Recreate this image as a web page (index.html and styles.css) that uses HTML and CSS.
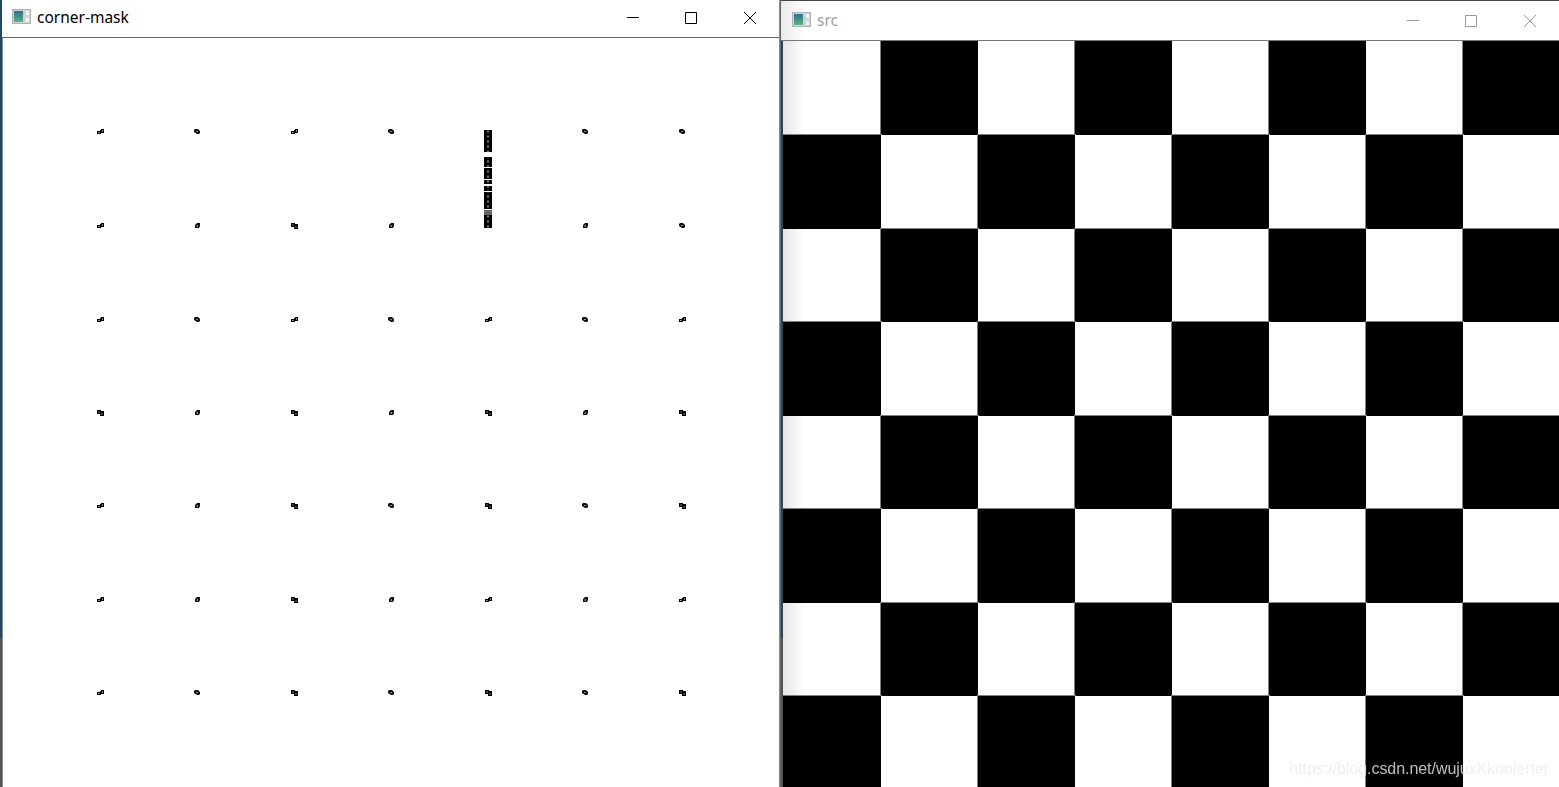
FILE: index.html
```html
<!DOCTYPE html>
<html lang="en">
<head>
<meta charset="utf-8">
<title>corner-mask and src</title>
<link rel="stylesheet" href="styles.css">
</head>
<body>
<svg class="defs" width="0" height="0" aria-hidden="true">
  <defs>
    <linearGradient id="appfill" x1="0" y1="0" x2="0" y2="1"><stop offset="0" stop-color="#2f6f92"/><stop offset="1" stop-color="#5fb083"/></linearGradient>
    <symbol id="app" viewBox="0 0 19 15">
      <rect x=".75" y=".75" width="17.5" height="13.5" fill="#f1f3f3" stroke="#b0b4b6" stroke-width="1.5"/>
      <rect x="2" y="2" width="9" height="11" fill="url(#appfill)"/>
      <rect x="11" y="2" width="3" height="11" fill="#c9d8d2"/>
      <rect x="14" y="6" width="3" height="3" fill="#cfd6d6"/>
    </symbol>
    <symbol id="wide" viewBox="0 0 7 6"><path fill="#000" fill-rule="evenodd" d="M0 2h3V1h1V0h3v4H4v1H0zM1.4 3h1v1h-1zM5 1.5h1v1H5z"/></symbol>
    <symbol id="round" viewBox="0 0 7 6"><path fill="#111" fill-rule="evenodd" d="M1 0h3l2 2v2l-1 1H3L0 3V1zM2.5 2h1v1h-1z"/></symbol>
    <symbol id="slim" viewBox="0 0 7 6"><path fill="#111" fill-rule="evenodd" d="M3 0h3v3L5 5H1V2zM2.6 2.5h1.4v1H2.6z"/></symbol>
    <symbol id="block" viewBox="0 0 7 6"><path fill="#000" fill-rule="evenodd" d="M0 0h4v1h3v5H3V4H0zM1.5 1.5h1v1h-1zM4.5 3.5h1v1h-1z"/></symbol>
    <pattern id="holes" width="8" height="5" patternUnits="userSpaceOnUse"><rect width="8" height="5" fill="#000"/><rect x="3" y="1.5" width="2" height="2" fill="#777"/></pattern>
  </defs>
</svg>

<main class="desktop">
  <section class="window mask-window">
    <header class="titlebar">
      <svg class="app-icon"><use href="#app"/></svg>
      <span class="title">corner-mask</span>
      <div class="controls">
        <span class="control"><svg viewBox="0 0 12 12"><path d="M0 5.5h12"/></svg></span>
        <span class="control"><svg viewBox="0 0 12 12"><path d="M.5.5h11v11H.5z"/></svg></span>
        <span class="control"><svg viewBox="0 0 12 12"><path d="M0 0l12 12M12 0L0 12"/></svg></span>
      </div>
    </header>
    <div class="mask">
      <svg class="dot"><use href="#wide"/></svg><svg class="dot"><use href="#round"/></svg><svg class="dot"><use href="#wide"/></svg><svg class="dot"><use href="#round"/></svg>
      <svg class="bar" viewBox="0 0 8 100">
        <rect x="0" y="1" width="8" height="22" fill="url(#holes)"/>
        <rect x="0" y="28" width="8" height="10" fill="url(#holes)"/>
        <rect x="0" y="39" width="8" height="11" fill="url(#holes)"/>
        <rect x="0" y="51" width="8" height="4" fill="url(#holes)"/>
        <rect x="0" y="57" width="8" height="5" fill="url(#holes)"/>
        <rect x="0" y="63" width="8" height="17" fill="url(#holes)"/>
        <rect x="0" y="81" width="8" height="5" fill="#666"/>
        <rect x="0" y="86" width="8" height="13" fill="url(#holes)"/>
      </svg>
      <svg class="dot"><use href="#round"/></svg><svg class="dot"><use href="#round"/></svg>

      <svg class="dot"><use href="#wide"/></svg><svg class="dot"><use href="#slim"/></svg><svg class="dot"><use href="#block"/></svg><svg class="dot"><use href="#slim"/></svg>
      <svg class="dot"><use href="#slim"/></svg><svg class="dot"><use href="#round"/></svg>

      <svg class="dot"><use href="#wide"/></svg><svg class="dot"><use href="#round"/></svg><svg class="dot"><use href="#wide"/></svg><svg class="dot"><use href="#round"/></svg><svg class="dot"><use href="#wide"/></svg><svg class="dot"><use href="#round"/></svg><svg class="dot"><use href="#wide"/></svg>

      <svg class="dot"><use href="#block"/></svg><svg class="dot"><use href="#slim"/></svg><svg class="dot"><use href="#block"/></svg><svg class="dot"><use href="#slim"/></svg><svg class="dot"><use href="#block"/></svg><svg class="dot"><use href="#slim"/></svg><svg class="dot"><use href="#block"/></svg>

      <svg class="dot"><use href="#wide"/></svg><svg class="dot"><use href="#slim"/></svg><svg class="dot"><use href="#block"/></svg><svg class="dot"><use href="#round"/></svg><svg class="dot"><use href="#block"/></svg><svg class="dot"><use href="#round"/></svg><svg class="dot"><use href="#block"/></svg>

      <svg class="dot"><use href="#wide"/></svg><svg class="dot"><use href="#slim"/></svg><svg class="dot"><use href="#block"/></svg><svg class="dot"><use href="#slim"/></svg><svg class="dot"><use href="#wide"/></svg><svg class="dot"><use href="#slim"/></svg><svg class="dot"><use href="#wide"/></svg>

      <svg class="dot"><use href="#wide"/></svg><svg class="dot"><use href="#round"/></svg><svg class="dot"><use href="#block"/></svg><svg class="dot"><use href="#round"/></svg><svg class="dot"><use href="#block"/></svg><svg class="dot"><use href="#round"/></svg><svg class="dot"><use href="#block"/></svg>
    </div>
  </section>

  <section class="window src-window">
    <header class="titlebar">
      <svg class="app-icon"><use href="#app"/></svg>
      <span class="title">src</span>
      <div class="controls">
        <span class="control"><svg viewBox="0 0 12 12"><path d="M0 5.5h12"/></svg></span>
        <span class="control"><svg viewBox="0 0 12 12"><path d="M.5.5h11v11H.5z"/></svg></span>
        <span class="control"><svg viewBox="0 0 12 12"><path d="M0 0l12 12M12 0L0 12"/></svg></span>
      </div>
    </header>
    <div class="board">
      <i class="w edge"></i><i class="k"></i><i class="w"></i><i class="k"></i><i class="w"></i><i class="k"></i><i class="w"></i><i class="k"></i>
      <i class="k"></i><i class="w"></i><i class="k"></i><i class="w"></i><i class="k"></i><i class="w"></i><i class="k"></i><i class="w"></i>
      <i class="w edge"></i><i class="k"></i><i class="w"></i><i class="k"></i><i class="w"></i><i class="k"></i><i class="w"></i><i class="k"></i>
      <i class="k"></i><i class="w"></i><i class="k"></i><i class="w"></i><i class="k"></i><i class="w"></i><i class="k"></i><i class="w"></i>
      <i class="w edge"></i><i class="k"></i><i class="w"></i><i class="k"></i><i class="w"></i><i class="k"></i><i class="w"></i><i class="k"></i>
      <i class="k"></i><i class="w"></i><i class="k"></i><i class="w"></i><i class="k"></i><i class="w"></i><i class="k"></i><i class="w"></i>
      <i class="w edge"></i><i class="k"></i><i class="w"></i><i class="k"></i><i class="w"></i><i class="k"></i><i class="w"></i><i class="k"></i>
      <i class="k"></i><i class="w"></i><i class="k"></i><i class="w"></i><i class="k"></i><i class="w"></i><i class="k"></i><i class="w"></i>
    </div>
  </section>

  <div class="watermark">https://blog.csdn.net/wujuxKkoolerter</div>
</main>
</body>
</html>
```

FILE: styles.css
```css
* { box-sizing: border-box; }

html, body {
  margin: 0;
  height: 100%;
  overflow: hidden;
}

.defs { position: absolute; }

.desktop {
  position: relative;
  width: 1559px;
  height: 787px;
  overflow: hidden;
  background: linear-gradient(#1c4a66 0, #1c4a66 638px, #555 638px, #555 100%);
}

.window {
  position: absolute;
  display: flex;
  flex-direction: column;
}

.mask-window {
  left: 2px;
  top: 0;
  width: 778px;
  height: 787px;
  background: #fff;
  border-right: 1px solid #8a8a8a;
  z-index: 2;
}

.src-window {
  left: 781px;
  top: 0;
  width: 778px;
  height: 787px;
  border-top: 1px solid #444;
  box-shadow: -1px 0 0 #666;
}

.titlebar {
  display: flex;
  align-items: center;
  flex: none;
  background: #fff;
}

.mask-window .titlebar {
  height: 38px;
  padding: 0 0 4px 10px;
  border-bottom: 1px solid #646464;
}

.src-window .titlebar {
  height: 40px;
  padding: 0 0 2px 11px;
  border-bottom: 1px solid #777;
  background: linear-gradient(90deg, #e9e9e9 0, #fff 24px);
}

.app-icon {
  width: 19px;
  height: 15px;
  flex: none;
}

.title {
  margin: 1px 0 0 6px;
  font: 15.5px/20px "Noto Sans", sans-serif;
  color: #000;
}

.src-window .title {
  color: #98a2a8;
}

.controls {
  display: flex;
  align-self: flex-start;
  margin: 6px 0 0 auto;
}

.src-window .controls {
  margin-top: 8px;
}

.control {
  display: flex;
  align-items: center;
  justify-content: center;
  width: 58.5px;
  height: 24px;
}

.control svg {
  width: 12px;
  height: 12px;
  fill: none;
  stroke: #000;
  stroke-width: 1;
}

.src-window .control svg {
  stroke: #999;
}

/* corner mask */
.mask {
  flex: 1;
  display: grid;
  grid-template-columns: repeat(7, 97px);
  grid-template-rows: 94px 94px 93px 93px 94px 93px 94px;
  align-items: start;
  justify-items: start;
  padding: 91px 0 0 94px;
  border-left: 1px solid #8a8a8a;
  background: #fff;
}

.dot {
  width: 7px;
  height: 6px;
  display: block;
}

.bar {
  grid-row: span 2;
  width: 8px;
  height: 100px;
  margin-left: -1px;
  display: block;
}

/* chessboard */
.board {
  flex: 1;
  display: grid;
  grid-template-columns: 98px repeat(7, 97px);
  grid-template-rows: 94px 94px 93px 94px 93px 94px 93px 94px;
  margin-left: 2px;
  overflow: hidden;
  min-height: 0;
}

.board i { display: block; }

.w { background: #fff; }

.edge { background: linear-gradient(90deg, #e6e6e6 0, #fff 22px); }

.k {
  background: #000;
  outline: 1px solid #808080;
}

.watermark {
  position: absolute;
  right: 10px;
  top: 759px;
  z-index: 3;
  font: 16px/20px "Liberation Sans", Arial, sans-serif;
  letter-spacing: -.05px;
  color: rgba(234, 234, 234, .8);
  filter: blur(.4px);
  white-space: nowrap;
}
```
